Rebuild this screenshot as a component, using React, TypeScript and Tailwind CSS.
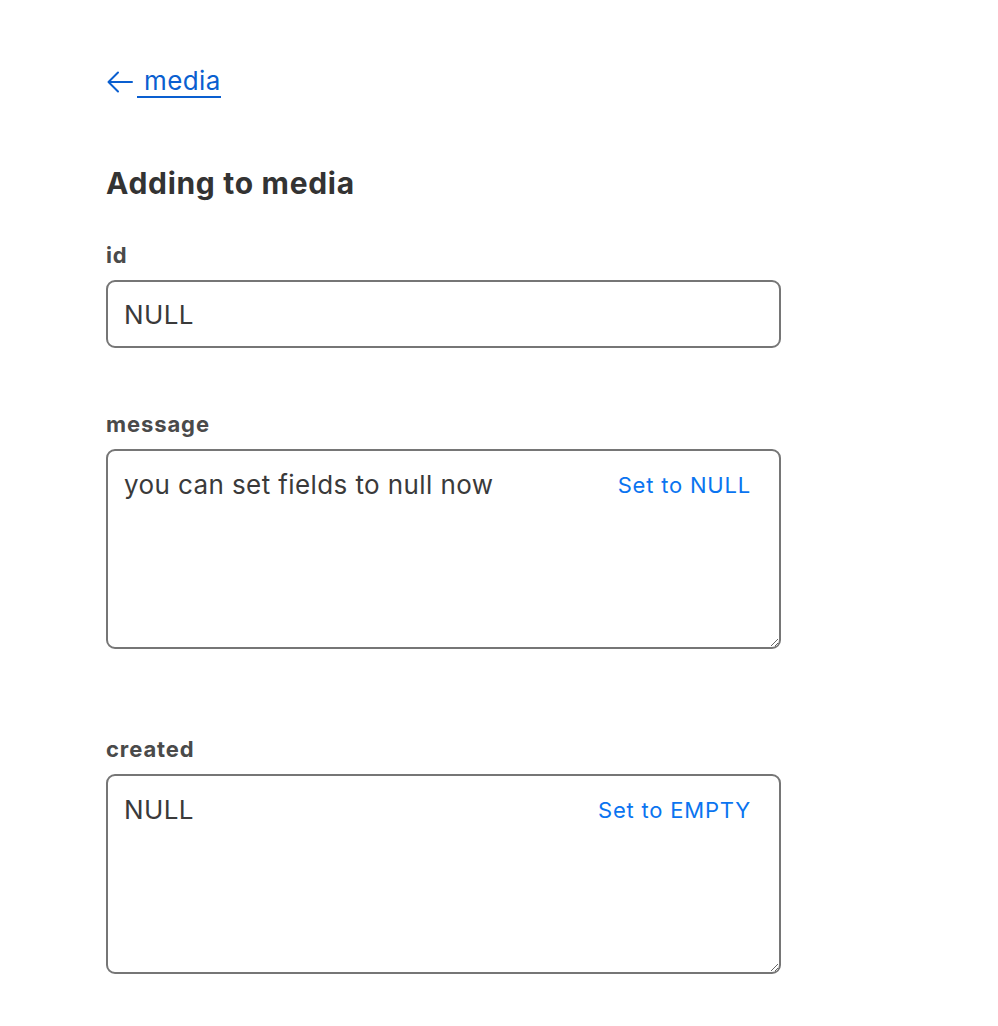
import React from "react";

function BackArrow() {
  return (
    <svg width="28" height="24" viewBox="0 0 28 24" fill="none" stroke="#0a5fd0" strokeWidth="2" strokeLinecap="round" strokeLinejoin="round">
      <path d="M26 12H3" />
      <path d="M12 2.5L2.5 12l9.5 9.5" />
    </svg>
  );
}

function Field({ label, value, button, mt, area }: { label: string; value: string; button?: string; mt: string; area?: boolean }) {
  return (
    <div className={mt}>
      <div className="text-[22px] font-bold tracking-[0.9px] text-[#4a4a4a] leading-[24px]">{label}</div>
      {area ? (
        <div className="relative mt-[13px] w-[675px]">
          <textarea
            defaultValue={value}
            className="block w-full h-[200px] resize-y rounded-[9px] border-2 border-[#767676] px-[16px] pt-[17px] pb-[13px] text-[26px] tracking-[0.4px] leading-[34px] text-[#3a3a3a] outline-none"
          />
          {button && (
            <button className="absolute right-[30px] top-[21px] text-[22px] tracking-[0.8px] leading-[30px] text-[#0a74f0]">{button}</button>
          )}
        </div>
      ) : (
        <input
          defaultValue={value}
          className="mt-[13px] block w-[675px] h-[68px] rounded-[9px] border-2 border-[#767676] px-[16px] text-[26px] tracking-[0.4px] text-[#3a3a3a] outline-none"
        />
      )}
    </div>
  );
}

export default function App() {
  return (
    <div className="min-h-[1026px] bg-white pl-[106px] pt-[65px]" style={{ fontFamily: "Inter, 'Noto Sans', sans-serif" }}>
      <a href="#" className="flex items-center text-[26px] tracking-[0.4px] text-[#0a5fd0] leading-[32px]">
        <BackArrow />
        <span className="ml-[3px] border-b-2 border-[#0a5fd0] pl-[7px] leading-[31px]">media</span>
      </a>
      <h1 className="mt-[67px] text-[30px] font-bold tracking-[0.7px] text-[#333] leading-[36px]">Adding to media</h1>
      <Field label="id" value="NULL" mt="mt-[42px]" />
      <Field label="message" value="you can set fields to null now" button="Set to NULL" mt="mt-[64px]" area />
      <Field label="created" value="NULL" button="Set to EMPTY" mt="mt-[88px]" area />
    </div>
  );
}
